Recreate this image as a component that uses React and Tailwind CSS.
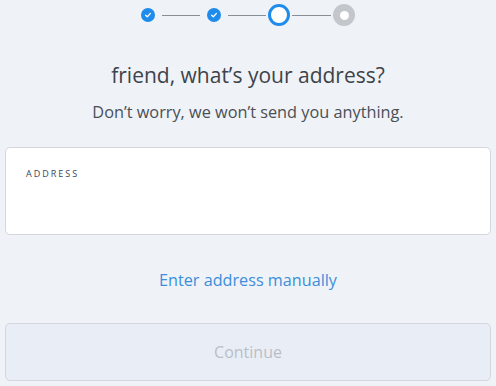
import React from "react";

function Check() {
  return (
    <svg width="8" height="8" viewBox="0 0 10 10" fill="none">
      <path d="M2 5.2 L4.2 7.2 L8 3" stroke="white" strokeWidth="1.6" strokeLinecap="round" strokeLinejoin="round" />
    </svg>
  );
}

export default function App() {
  return (
    <div className="w-[496px] h-[386px] bg-[#eff2f7] flex flex-col items-center px-[5px]" style={{ fontFamily: '"Open Sans", "Lato", sans-serif' }}>
      <div className="flex items-center mt-[4px] h-[22px]">
        <div className="w-[14px] h-[14px] rounded-full bg-[#1f8ceb] flex items-center justify-center"><Check /></div>
        <div className="w-[38px] h-px bg-[#8a8f96] mx-[7px]" />
        <div className="w-[14px] h-[14px] rounded-full bg-[#1f8ceb] flex items-center justify-center"><Check /></div>
        <div className="w-[38px] h-px bg-[#8a8f96] ml-[7px] mr-[2px]" />
        <div className="w-[22px] h-[22px] rounded-full border-[3px] border-[#1f8ceb] bg-white" />
        <div className="w-[39px] h-px bg-[#8a8f96] mx-[2px]" />
        <div className="w-[22px] h-[22px] rounded-full bg-[#c3c7cc] flex items-center justify-center">
          <div className="w-[9px] h-[9px] rounded-full bg-white" />
        </div>
      </div>
      <h1 className="mt-[35px] text-[21px] leading-[28px] text-[#3e434a]">friend, what’s your address?</h1>
      <p className="mt-[12px] text-[16.3px] leading-[22px] text-[#4a4f56]">Don’t worry, we won’t send you anything.</p>
      <div className="mt-[24px] w-full h-[88px] bg-white border border-[#d3d7dd] rounded-[5px] px-[20px] pt-[20px]">
        <div className="text-[9px] tracking-[2px] text-[#38465a] leading-[12px]">ADDRESS</div>
      </div>
      <div className="mt-[34px] text-[16.2px] leading-[22px] text-[#3b8fdb]">Enter address manually</div>
      <div className="mt-[32px] w-full h-[58px] bg-[#e9eef6] border border-[#d3d7dd] rounded-[5px] flex items-center justify-center">
        <span className="text-[16px] text-[#b9bec6]">Continue</span>
      </div>
    </div>
  );
}
